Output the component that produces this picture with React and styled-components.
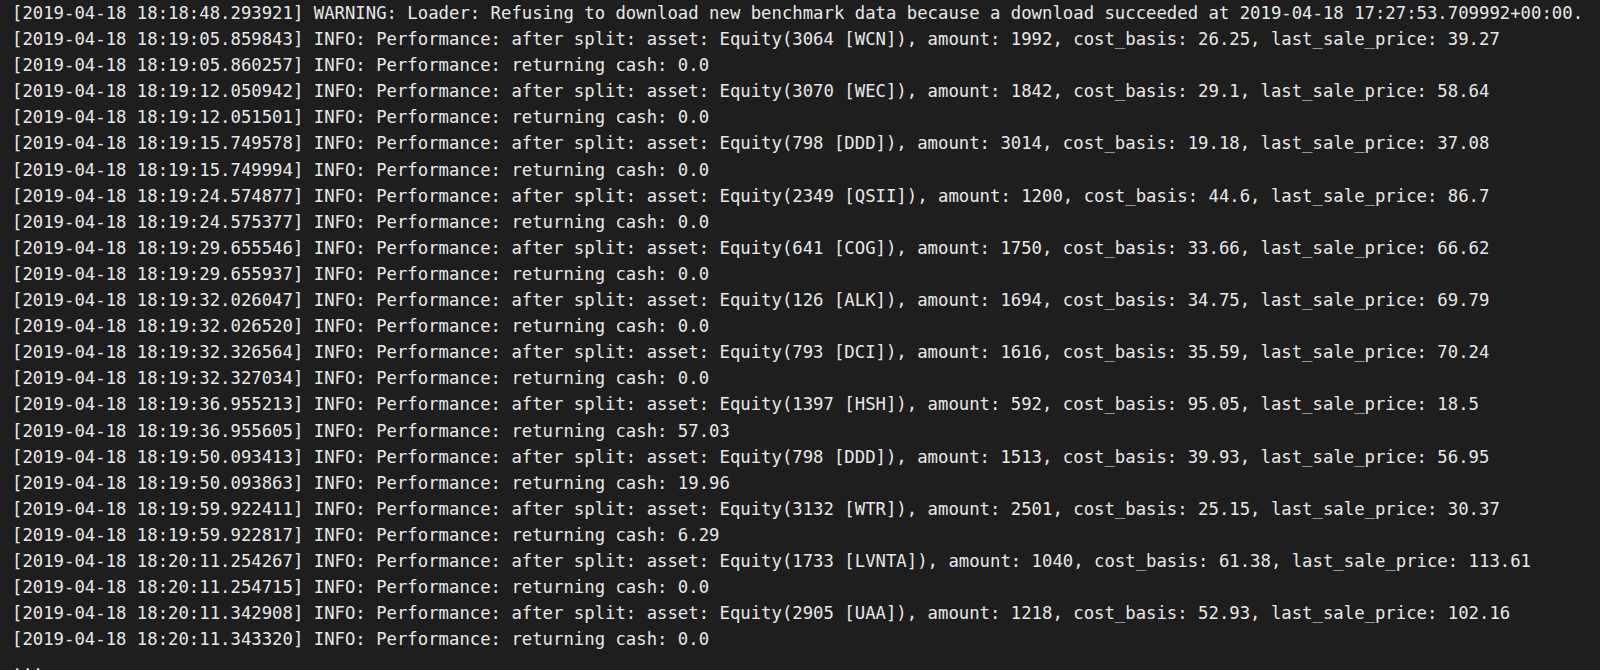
import React from "react";
import styled, { createGlobalStyle } from "styled-components";

const Global = createGlobalStyle`
  html, body { margin: 0; padding: 0; background: #1e1e1e; }
  body { overflow: hidden; }
`;

const Terminal = styled.div`
  width: 1600px;
  height: 670px;
  box-sizing: border-box;
  padding: 0 0 0 12px;
  background: #1e1e1e;
  color: #e8e8e8;
  font-family: "DejaVu Sans Mono", "Liberation Mono", monospace;
  font-size: 17.3px;
  line-height: 26.1px;
  overflow: hidden;
`;

const Line = styled.div`
  white-space: pre;
`;

const lines = [
  "[2019-04-18 18:18:48.293921] WARNING: Loader: Refusing to download new benchmark data because a download succeeded at 2019-04-18 17:27:53.709992+00:00.",
  "[2019-04-18 18:19:05.859843] INFO: Performance: after split: asset: Equity(3064 [WCN]), amount: 1992, cost_basis: 26.25, last_sale_price: 39.27",
  "[2019-04-18 18:19:05.860257] INFO: Performance: returning cash: 0.0",
  "[2019-04-18 18:19:12.050942] INFO: Performance: after split: asset: Equity(3070 [WEC]), amount: 1842, cost_basis: 29.1, last_sale_price: 58.64",
  "[2019-04-18 18:19:12.051501] INFO: Performance: returning cash: 0.0",
  "[2019-04-18 18:19:15.749578] INFO: Performance: after split: asset: Equity(798 [DDD]), amount: 3014, cost_basis: 19.18, last_sale_price: 37.08",
  "[2019-04-18 18:19:15.749994] INFO: Performance: returning cash: 0.0",
  "[2019-04-18 18:19:24.574877] INFO: Performance: after split: asset: Equity(2349 [QSII]), amount: 1200, cost_basis: 44.6, last_sale_price: 86.7",
  "[2019-04-18 18:19:24.575377] INFO: Performance: returning cash: 0.0",
  "[2019-04-18 18:19:29.655546] INFO: Performance: after split: asset: Equity(641 [COG]), amount: 1750, cost_basis: 33.66, last_sale_price: 66.62",
  "[2019-04-18 18:19:29.655937] INFO: Performance: returning cash: 0.0",
  "[2019-04-18 18:19:32.026047] INFO: Performance: after split: asset: Equity(126 [ALK]), amount: 1694, cost_basis: 34.75, last_sale_price: 69.79",
  "[2019-04-18 18:19:32.026520] INFO: Performance: returning cash: 0.0",
  "[2019-04-18 18:19:32.326564] INFO: Performance: after split: asset: Equity(793 [DCI]), amount: 1616, cost_basis: 35.59, last_sale_price: 70.24",
  "[2019-04-18 18:19:32.327034] INFO: Performance: returning cash: 0.0",
  "[2019-04-18 18:19:36.955213] INFO: Performance: after split: asset: Equity(1397 [HSH]), amount: 592, cost_basis: 95.05, last_sale_price: 18.5",
  "[2019-04-18 18:19:36.955605] INFO: Performance: returning cash: 57.03",
  "[2019-04-18 18:19:50.093413] INFO: Performance: after split: asset: Equity(798 [DDD]), amount: 1513, cost_basis: 39.93, last_sale_price: 56.95",
  "[2019-04-18 18:19:50.093863] INFO: Performance: returning cash: 19.96",
  "[2019-04-18 18:19:59.922411] INFO: Performance: after split: asset: Equity(3132 [WTR]), amount: 2501, cost_basis: 25.15, last_sale_price: 30.37",
  "[2019-04-18 18:19:59.922817] INFO: Performance: returning cash: 6.29",
  "[2019-04-18 18:20:11.254267] INFO: Performance: after split: asset: Equity(1733 [LVNTA]), amount: 1040, cost_basis: 61.38, last_sale_price: 113.61",
  "[2019-04-18 18:20:11.254715] INFO: Performance: returning cash: 0.0",
  "[2019-04-18 18:20:11.342908] INFO: Performance: after split: asset: Equity(2905 [UAA]), amount: 1218, cost_basis: 52.93, last_sale_price: 102.16",
  "[2019-04-18 18:20:11.343320] INFO: Performance: returning cash: 0.0",
  "...",
];

export default function App() {
  return (
    <>
      <Global />
      <Terminal>
        {lines.map((l, i) => (
          <Line key={i}>{l}</Line>
        ))}
      </Terminal>
    </>
  );
}
